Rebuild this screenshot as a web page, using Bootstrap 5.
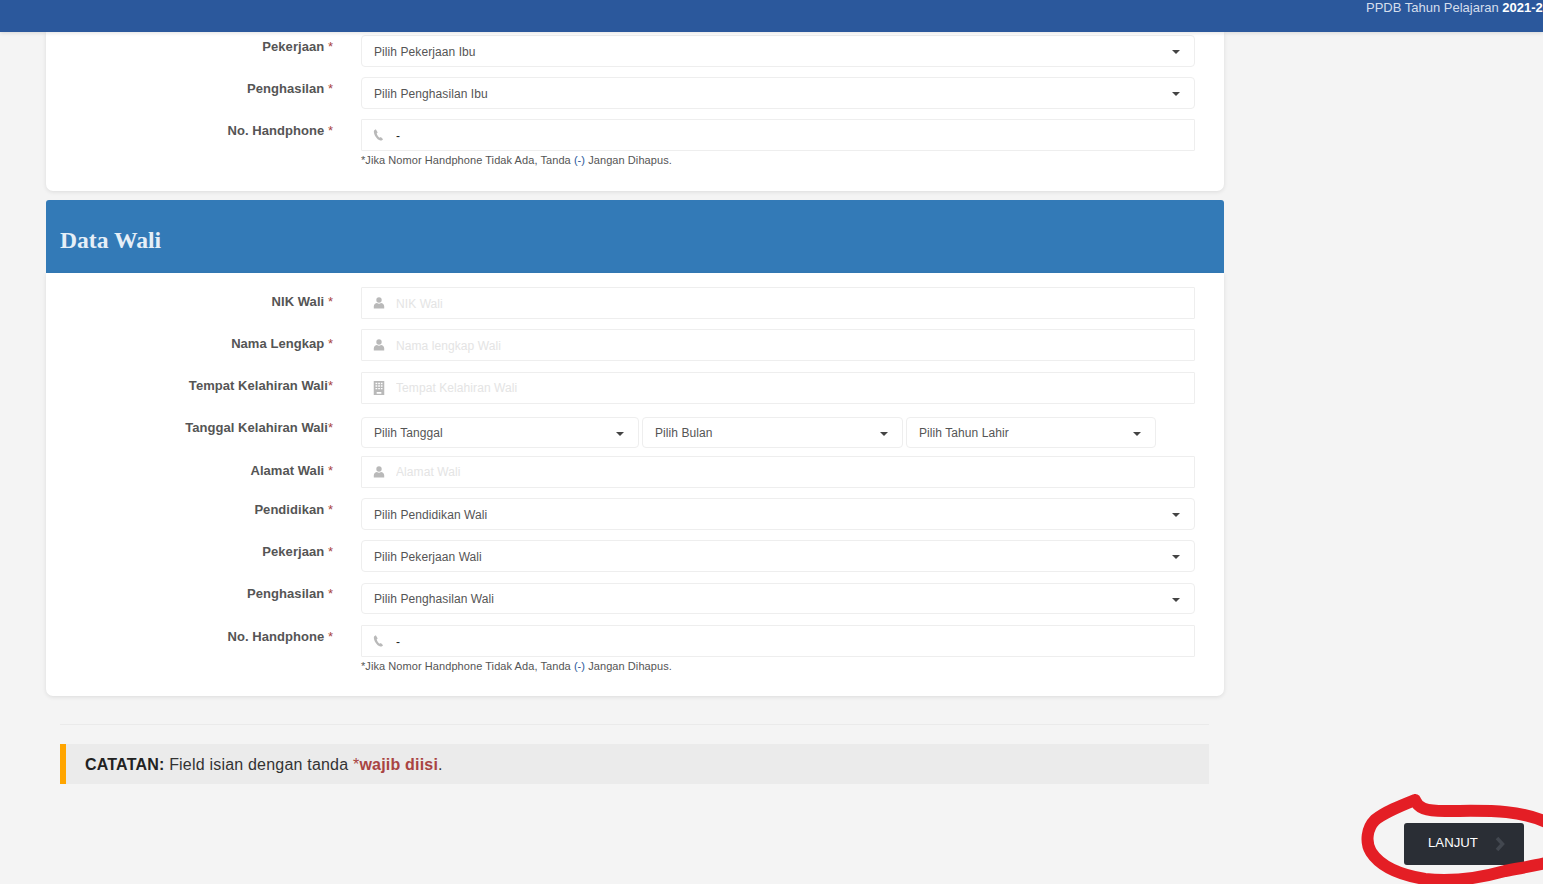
<!DOCTYPE html>
<html lang="id">
<head>
<meta charset="utf-8">
<title>PPDB - Data Wali</title>
<link href="https://cdn.jsdelivr.net/npm/bootstrap@5.3.0/dist/css/bootstrap.min.css" rel="stylesheet">
<style>
html,body{height:884px;overflow:hidden}
body{background:#f4f4f4;font-family:"Liberation Sans",Arial,sans-serif;color:#555;font-size:14px;position:relative}
.topbar{height:32px;background:#2b589c;color:#d5deec;font-size:13px;line-height:15px;padding-left:1366px;white-space:nowrap;overflow:hidden;box-shadow:0 1px 4px rgba(0,0,0,.12);position:relative;z-index:2}
.topbar b{color:#fff}
.pagebody{width:1178px;margin-left:46px}
.panel{background:#fff;border-radius:0 0 7px 7px;box-shadow:0 1px 4px rgba(0,0,0,.1)}
.panel-a{height:159px;padding-top:3px}
.panel-b{height:423px;padding-top:14px}
.panel-head{height:73px;margin-top:9px;background:#337ab7;border-radius:3px 3px 0 0;padding:26px 14px 0;font:bold 23.600px/28px "Liberation Serif","Times New Roman",serif;color:#e6eff7}
.frow{display:flex;margin-bottom:10px}
.frow.gap11{margin-bottom:11px}
.frow.gap13{margin-bottom:13px}
.frow.gap8{margin-bottom:8px}
.flabel{width:287px;flex:none;text-align:right;font-weight:700;font-size:13px;letter-spacing:.05px;line-height:20px;padding-top:2px;margin:0;color:#555}
.flabel.low{padding-top:5px}
.flabel.mid{padding-top:4px}
.flabel.top{padding-top:1px}
.flabel span{color:#a94442;font-weight:400}
.fctl{width:834px;margin-left:28px;flex:none;position:relative}
.fctl .form-control,.fctl .form-select{height:32px;min-height:0;border:1px solid #eee;font-size:12px;letter-spacing:.08px;color:#555;box-shadow:none;line-height:18px}
.fctl .form-control{border-radius:1px;padding:1px 12px 0 34px;color:#222}
.fctl .form-control.flush{padding-top:0}
.fctl .form-control::placeholder{color:#e4e4e4;opacity:1}
.fctl .form-select{border-radius:4px;padding:1px 30px 0 12px;background-image:url("data:image/svg+xml,%3Csvg xmlns='http://www.w3.org/2000/svg' width='8' height='4'%3E%3Cpath d='M0 0h8L4 4z' fill='%23444'/%3E%3C/svg%3E");background-size:8px 4px;background-position:right 14px top 14px}
.fctl .form-select.short{height:31px;padding-top:0}
.datepick{display:flex;gap:3px}
.sel-d{width:278px;flex:none}.sel-m{width:261px;flex:none}.sel-y{width:250px;flex:none}
.ficon{position:absolute;left:12px;top:10px;width:12px;height:12px;fill:#b9b9b9}
.ficon.tall{width:14px;height:14px;top:9px;left:11px}
.fnote{font-size:11px;letter-spacing:.07px;line-height:14px;margin:2px 0 0;color:#555}
.fnote i{font-style:normal;color:#2b589c}
.rule{height:1px;background:#eaeaea;margin:28px 15px 0 14px}
.notice{height:40px;margin:19px 15px 0 14px;background:#ebebeb;border-left:6px solid #ffa500;padding-left:19px;font-size:16px;letter-spacing:.2px;line-height:41px;color:#333}
.notice strong{color:#222}
.notice em{font-style:normal;color:#a94442}
.notice u{text-decoration:none;color:#a94442}
.nextbar{display:flex;justify-content:flex-end;padding:39px 19px 0 0}
.nextbtn{width:120px;height:42px;background:#2a2e35;border:0;border-radius:3px;color:#fff;font-size:13.200px;line-height:40px;padding:0 0 2px 24px;display:flex;align-items:center;gap:17px}
.nextbtn svg{width:10px;height:14px;margin-top:2px}
.scribble{position:absolute;left:0;top:0;width:1543px;height:884px;pointer-events:none;z-index:3}
</style>
</head>
<body>
<div class="topbar">PPDB Tahun Pelajaran <b>2021-2022</b></div>
<svg width="0" height="0" class="d-block" aria-hidden="true">
  <symbol id="i-user" viewBox="0 0 12 12"><circle cx="6" cy="3" r="2.7"/><path d="M.8 11.600V9.200C.8 7.400 2.400 6.200 4 6c.6.5 1.300.7 2 .7s1.400-.2 2-.7c1.600.2 3.200 1.400 3.200 3.200v2.400z"/></symbol>
  <symbol id="i-bld" viewBox="0 0 12 12"><path fill-rule="evenodd" d="M1.500 0h9v12h-9zM3 1.500v1.200h1.500V1.500zm2.300 0v1.200h1.500V1.500zm2.300 0v1.200H9V1.500zM3 3.700v1.200h1.500V3.700zm2.300 0v1.200h1.500V3.700zm2.300 0v1.200H9V3.700zM3 5.900v1.200h1.500V5.900zm2.300 0v1.200h1.500V5.900zm2.300 0v1.200H9V5.900zM4 9.500V11h4V9.500z"/></symbol>
  <symbol id="i-tel" viewBox="0 0 12 12"><path d="M2.800.3 1.300 1.300C.8 1.700.8 2.800 1 4c.6 2.900 3 6.300 5.700 7.300.9.300 1.800.3 2.300-.1l1.100-1L7.800 8l-1 .7C5.200 8 3.900 5.900 3.700 4.300l1-.7z"/></symbol>
</svg>
<div class="pagebody">
  <div class="panel panel-a">
    <div class="frow"><label class="flabel">Pekerjaan <span>*</span></label><div class="fctl"><select class="form-select"><option>Pilih Pekerjaan Ibu</option></select></div></div>
    <div class="frow"><label class="flabel">Penghasilan <span>*</span></label><div class="fctl"><select class="form-select"><option>Pilih Penghasilan Ibu</option></select></div></div>
    <div class="frow"><label class="flabel">No. Handphone <span>*</span></label><div class="fctl"><svg class="ficon"><use href="#i-tel"/></svg><input class="form-control" value="-"><p class="fnote">*Jika Nomor Handphone Tidak Ada, Tanda <i>(-)</i> Jangan Dihapus.</p></div></div>
  </div>
  <div class="panel-head">Data Wali</div>
  <div class="panel panel-b">
    <div class="frow"><label class="flabel low">NIK Wali <span>*</span></label><div class="fctl"><svg class="ficon"><use href="#i-user"/></svg><input class="form-control" placeholder="NIK Wali"></div></div>
    <div class="frow gap11"><label class="flabel low">Nama Lengkap <span>*</span></label><div class="fctl"><svg class="ficon"><use href="#i-user"/></svg><input class="form-control" placeholder="Nama lengkap Wali"></div></div>
    <div class="frow gap13"><label class="flabel mid">Tempat Kelahiran Wali<span>*</span></label><div class="fctl"><svg class="ficon tall"><use href="#i-bld"/></svg><input class="form-control flush" placeholder="Tempat Kelahiran Wali"></div></div>
    <div class="frow gap8"><label class="flabel top">Tanggal Kelahiran Wali<span>*</span></label><div class="fctl datepick"><select class="form-select short sel-d"><option>Pilih Tanggal</option></select><select class="form-select short sel-m"><option>Pilih Bulan</option></select><select class="form-select short sel-y"><option>Pilih Tahun Lahir</option></select></div></div>
    <div class="frow"><label class="flabel low">Alamat Wali <span>*</span></label><div class="fctl"><svg class="ficon"><use href="#i-user"/></svg><input class="form-control flush" placeholder="Alamat Wali"></div></div>
    <div class="frow"><label class="flabel">Pendidikan <span>*</span></label><div class="fctl"><select class="form-select"><option>Pilih Pendidikan Wali</option></select></div></div>
    <div class="frow gap11"><label class="flabel">Pekerjaan <span>*</span></label><div class="fctl"><select class="form-select"><option>Pilih Pekerjaan Wali</option></select></div></div>
    <div class="frow gap11"><label class="flabel top">Penghasilan <span>*</span></label><div class="fctl"><select class="form-select short"><option>Pilih Penghasilan Wali</option></select></div></div>
    <div class="frow"><label class="flabel">No. Handphone <span>*</span></label><div class="fctl"><svg class="ficon"><use href="#i-tel"/></svg><input class="form-control" value="-"><p class="fnote">*Jika Nomor Handphone Tidak Ada, Tanda <i>(-)</i> Jangan Dihapus.</p></div></div>
  </div>
  <div class="rule"></div>
  <div class="notice"><strong>CATATAN:</strong> Field isian dengan tanda <u>*</u><em class="fw-bold">wajib diisi</em>.</div>
</div>
<div class="nextbar"><button class="nextbtn" type="button">LANJUT <svg viewBox="0 0 10 14"><path d="M2 1l5.500 6L2 13" fill="none" stroke="#42474f" stroke-width="3.500"/></svg></button></div>
<svg class="scribble" viewBox="0 0 1543 884" aria-hidden="true"><path d="M1415 800C1400 806 1385 812 1375 820C1367 828 1365 842 1371 852C1380 866 1400 875 1425 879C1450 882 1480 878 1505 871C1520 868 1535 866 1550 862M1415 800C1418 808 1425 811 1445 811C1480 811 1520 808 1550 824" fill="none" stroke="#e41e25" stroke-width="12" stroke-linecap="round" stroke-linejoin="round"/></svg>
</body>
</html>
